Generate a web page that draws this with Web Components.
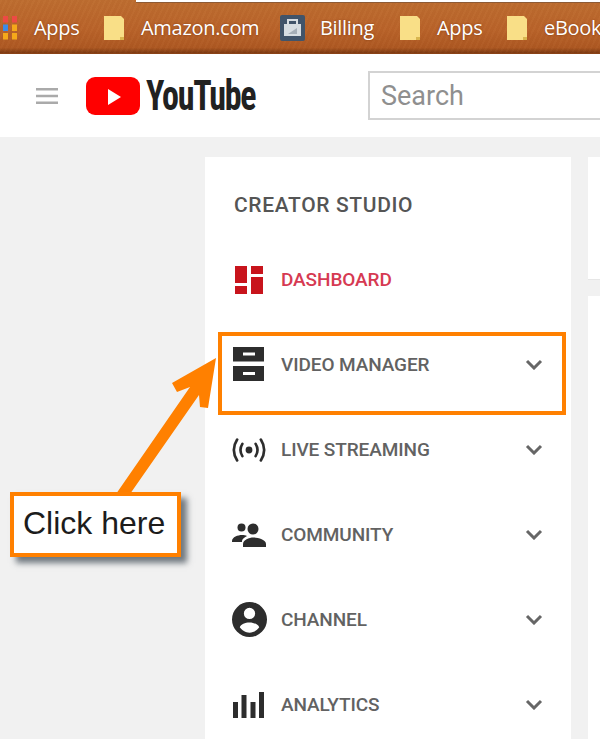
<!DOCTYPE html>
<html><head><meta charset="utf-8">
<style>
html,body{margin:0;padding:0;height:739px;overflow:hidden;background:#f1f1f1;font-family:Roboto,"Liberation Sans",sans-serif}
</style></head><body>
<template id="t-bar"><style>
:host{display:flex;align-items:center;height:54px;box-sizing:border-box;padding:3px 0 0 3px;overflow:hidden;position:relative;
background:repeating-linear-gradient(115deg,rgba(255,220,170,.025) 0 2px,rgba(90,30,0,.025) 2px 5px),linear-gradient(#bd6d30 0,#b9632a 55%,#ad5822 90%,#7d3a12 100%);
border-bottom:1px solid #8a4216}
.tab{position:absolute;left:136px;top:0;right:0;height:2px;background:#fff;border-bottom:1px solid #8d5a35}
</style><div class="tab"></div><slot></slot></template>

<template id="t-mark"><style>
:host{display:inline-flex;align-items:center;flex:none;color:#fff;font:20px/1 "Open Sans","Liberation Sans",sans-serif;letter-spacing:-.3px;text-shadow:0 0 2px rgba(120,50,10,.9)}
.i{display:flex;flex:none}
</style><span class="i"><slot name="icon"></slot></span><slot></slot></template>

<template id="t-top"><style>
:host{display:flex;align-items:center;height:83px;background:#fff;overflow:hidden;padding-left:36px}
.logo{display:flex;align-items:center;margin-left:28px;flex:none}
.word{font:700 42px/1 "Liberation Sans Narrow","Roboto Condensed",Roboto,sans-serif;color:#212121;letter-spacing:-1.6px;transform:scaleX(.81);transform-origin:left center;margin-left:6px;width:222px;white-space:nowrap}
.search{flex:none;width:300px;height:49px;box-sizing:border-box;border:2px solid #d3d3d3;border-right:0;font:27px/47px Roboto,sans-serif;color:#8f8f8f;padding-left:11px}
</style>
<svg width="22" height="16" viewBox="0 0 23 16" preserveAspectRatio="none" style="flex:none"><path d="M0 0h23v2.600H0zM0 6.700h23v2.600H0zM0 13.400h23V16H0z" fill="#aaa"/></svg>
<div class="logo"><svg width="54" height="38" viewBox="0 0 54 38"><rect width="54" height="38" rx="9" fill="#f00"/><path d="M22 12l13 8-13 8z" fill="#fff"/></svg><span class="word">YouTube</span></div>
<div class="search">Search</div></template>

<template id="t-main"><style>
:host{display:flex;align-items:flex-start;gap:17px;padding:20px 0 0 205px;height:602px;box-sizing:border-box;overflow:hidden}
.side{width:366px;height:582px;background:#fff;flex:none;box-sizing:border-box}
.right{flex:1;display:flex;flex-direction:column;gap:16px;height:582px}
.a{height:122px;background:#fff;border-bottom:1px solid #e6e6e6}
.b{flex:1;background:#fff}
h2{margin:0;font:500 21px/24px Roboto,sans-serif;letter-spacing:.64px;color:#555;padding:36px 0 14px 29px;height:30px}
</style><div class="side"><h2>CREATOR STUDIO</h2><slot></slot></div><div class="right"><div class="a"></div><div class="b"></div></div></template>

<template id="t-item"><style>
:host{display:flex;align-items:center;height:85px;box-sizing:border-box;padding-left:28px;position:relative;font:500 19px/1 Roboto,sans-serif;color:#626262;letter-spacing:-.1px}
:host([active]){color:#d63a52}
.ic{width:48px;flex:none;display:flex;align-items:center}
.t{flex:1}
.ch{flex:none;margin-right:28px;display:flex}
:host([nochev]) .ch{display:none}
</style><span class="ic"><slot name="icon"></slot></span><span class="t"><slot></slot></span><span class="ch"><svg width="18" height="11" viewBox="0 0 18 11"><path d="M2 2l7 7 7-7" fill="none" stroke="#666" stroke-width="3"/></svg></span></template>

<template id="t-callouts"><style>
:host{display:block;position:absolute;left:0;top:0;width:600px;height:739px;pointer-events:none}
.hl{position:absolute;left:218px;top:332px;width:348px;height:83px;box-sizing:border-box;border:4px solid #ff8000}
svg{position:absolute;left:0;top:0}
.c{position:absolute;left:10px;top:492px;width:171px;height:65px;box-sizing:border-box;border:4px solid #ff8000;background:#fff;box-shadow:6px 6px 6px rgba(70,80,90,.75);font:32px/1 "Liberation Sans",Arial,sans-serif;color:#1c1c1c;display:flex;align-items:center;padding:0 0 3px 9px;white-space:nowrap}
</style><div class="hl"></div>
<svg width="600" height="739"><polygon fill="#ff8000" points="216,358 172,383 177,392 190,387 116,494 130,494 199,395 200,407 208,408"/></svg>
<div class="c">Click here</div></template>

<bar-top>
 <book-mark style="width:101px"><svg slot="icon" width="14" height="24" viewBox="0 0 14 24" style="margin-right:17px"><path d="M0 0h5v6.500H0zM9 0h5v6.500H9z" fill="#ec4a44"/><path d="M0 8.500h5V15H0z" fill="#3d8be8"/><path d="M9 8.500h5V15H9zM0 17h5v6.500H0zM9 17h5v6.500H9z" fill="#f5a81a"/></svg>Apps</book-mark>
 <book-mark style="width:176px"><svg slot="icon" width="20" height="24" viewBox="0 0 20 24" style="margin-right:17px"><path d="M0 0h17l3 3v21H0z" fill="#f9df87"/><path d="M16 21h4v3h-4z" fill="#d9b64f"/></svg>Amazon.com</book-mark>
 <book-mark style="width:120px"><svg slot="icon" width="25" height="26" viewBox="0 0 25 26" style="margin-right:15px"><rect width="25" height="26" rx="2" fill="#41546a"/><rect x="4" y="9" width="17" height="12" fill="#d7dde2"/><path d="M8 9V5h9v4" fill="none" stroke="#d7dde2" stroke-width="2"/><path d="M8 19l9-6v6z" fill="#a5aeb7"/></svg>Billing</book-mark>
 <book-mark style="width:107px"><svg slot="icon" width="20" height="24" viewBox="0 0 20 24" style="margin-right:17px"><path d="M0 0h17l3 3v21H0z" fill="#f9df87"/><path d="M16 21h4v3h-4z" fill="#d9b64f"/></svg>Apps</book-mark>
 <book-mark><svg slot="icon" width="20" height="24" viewBox="0 0 20 24" style="margin-right:17px"><path d="M0 0h17l3 3v21H0z" fill="#f9df87"/><path d="M16 21h4v3h-4z" fill="#d9b64f"/></svg>eBook</book-mark>
</bar-top>
<top-head></top-head>
<main-area>
 <nav-item active nochev><svg slot="icon" width="28" height="28" viewBox="0 0 28 28" style="margin-left:2px"><path d="M0 0h12v17H0zM16 0h12v8H16zM16 11h12v17H16zM0 20h12v8H0z" fill="#c8141c"/></svg>DASHBOARD</nav-item>
 <nav-item><svg slot="icon" width="31" height="34" viewBox="0 0 31 34" style="margin-top:-2px"><path fill-rule="evenodd" d="M0 0h31v14.500H0zM0 19h31v15H0zM10 5.500v3h12v-3zM10 25v3h12v-3z" fill="#2d2d2d"/></svg>VIDEO MANAGER</nav-item>
 <nav-item><svg slot="icon" width="36" height="26" viewBox="0 0 38 26" style="margin-left:-2px"><circle cx="19" cy="13" r="3.600" fill="#2d2d2d"/><g fill="none" stroke="#2d2d2d" stroke-width="2.800" stroke-linecap="round"><path d="M12 6.500q-4 6.500 0 13M26 6.500q4 6.500 0 13M6.500 2q-7 11 0 22M31.500 2q7 11 0 22"/></g></svg>LIVE STREAMING</nav-item>
 <nav-item><svg slot="icon" width="34" height="24" viewBox="0 0 34 24" style="margin-left:-1px"><g fill="#2d2d2d"><circle cx="9.500" cy="4.500" r="4"/><circle cx="21" cy="6" r="5.500"/><path d="M0 18c0-4 6-6 10-6 2 0 3.500.4 5 1-3 1.500-5 3.500-5 5v1H0z"/><path d="M11 24v-3c0-4 6-6.500 10.500-6.500S34 17 34 21v3z"/></g></svg>COMMUNITY</nav-item>
 <nav-item><svg slot="icon" width="35" height="35" viewBox="0 0 36 36" style="margin-left:-1px"><path fill-rule="evenodd" d="M18 0a18 18 0 1 1 0 36a18 18 0 0 1 0-36zM18 6a5.800 5.800 0 1 0 0 11.600a5.800 5.800 0 0 0 0-11.600zM18 21c-4.500 0-9 2-10 5 2 3 6 5.500 10 5.500s8-2.500 10-5.500c-1-3-5.500-5-10-5z" fill="#2d2d2d"/></svg>CHANNEL</nav-item>
 <nav-item><svg slot="icon" width="31" height="26" viewBox="0 0 31 26"><path d="M0 10h5v16H0zM8.500 3h5v23h-5zM17.500 10h5v16h-5zM26 0h5v26h-5z" fill="#2d2d2d"/></svg>ANALYTICS</nav-item>
</main-area>
<call-outs></call-outs>
<script>
function def(name,id){customElements.define(name,class extends HTMLElement{constructor(){super();this.attachShadow({mode:'open'}).appendChild(document.getElementById(id).content.cloneNode(true));}});}
def('bar-top','t-bar');def('book-mark','t-mark');def('top-head','t-top');def('main-area','t-main');def('nav-item','t-item');def('call-outs','t-callouts');
</script>
</body></html>
